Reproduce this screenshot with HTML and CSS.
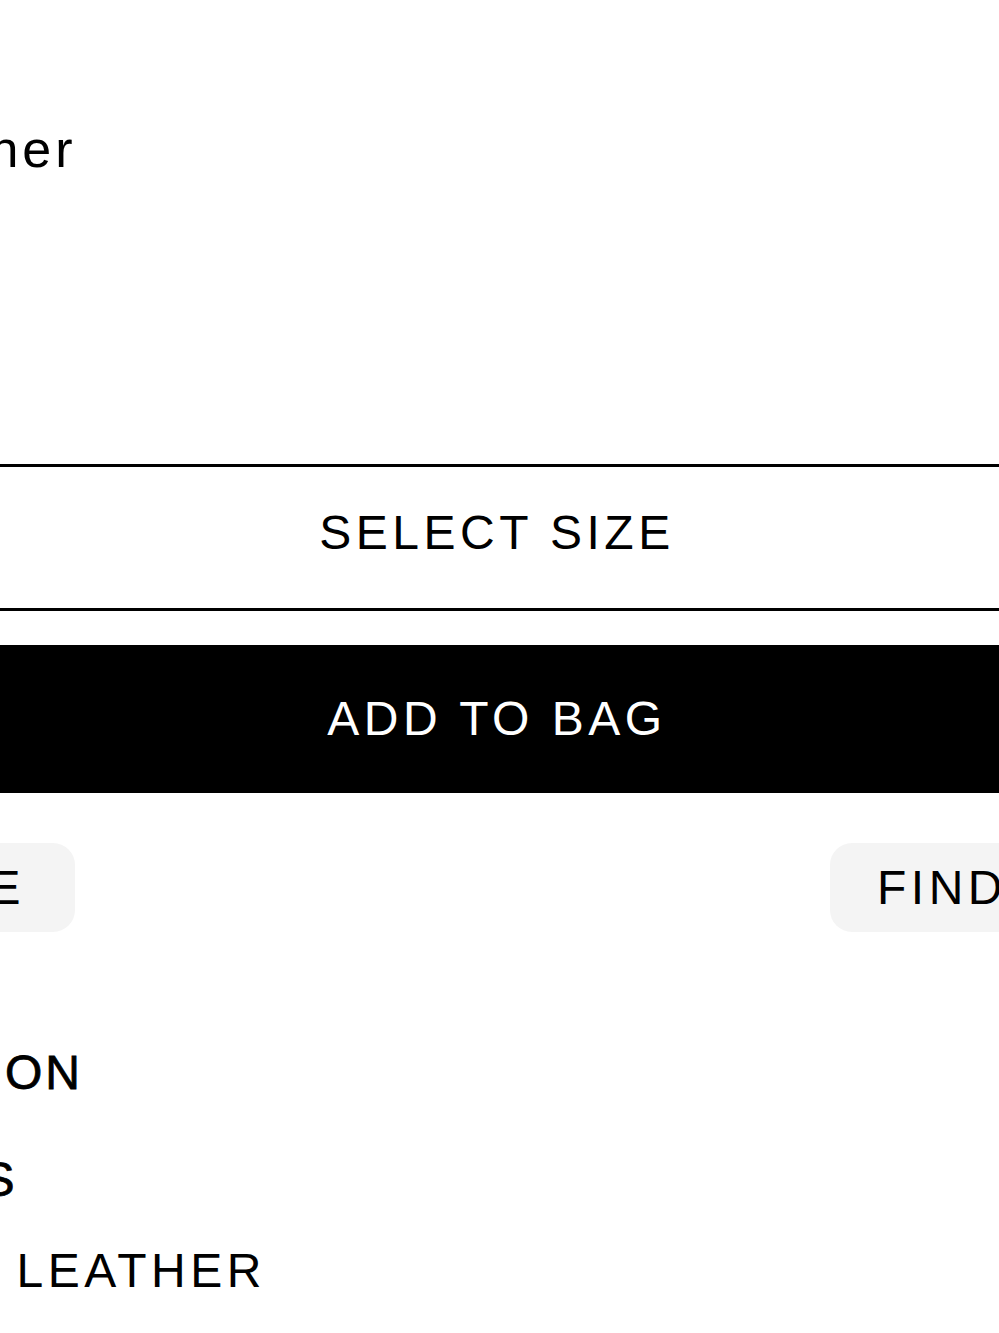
FILE: index.html
```html
<!DOCTYPE html>
<html lang="en">
<head>
<meta charset="utf-8">
<title>Product</title>
<link rel="stylesheet" href="styles.css">
</head>
<body>
<main class="page">
  <h1 class="title">Runner</h1>
  <button class="btn btn-outline">SELECT SIZE</button>
  <button class="btn btn-solid">ADD TO BAG</button>
  <div class="pills">
    <a class="pill pill-left">SIZE GUIDE</a>
    <a class="pill">FIND IN STORE</a>
  </div>
  <section class="details">
    <h2 class="head head-desc">DESCRIPTION</h2>
    <h2 class="head head-det">DETAILS</h2>
    <p class="spec">CALF LEATHER</p>
  </section>
</main>
</body>
</html>
```
FILE: styles.css
```css
html, body {
  margin: 0;
  padding: 0;
  background: #fff;
}
body {
  width: 999px;
  height: 1333px;
  overflow: hidden;
  font-family: "Liberation Sans", Arial, sans-serif;
  color: #000;
}
.page {
  margin-left: -400px;
  width: 1794px;
  display: flex;
  flex-direction: column;
}
.title {
  margin: 119px 0 0 282px;
  font-size: 52px;
  line-height: 60px;
  font-weight: 400;
  letter-spacing: 4px;
  white-space: nowrap;
}
.btn {
  display: flex;
  align-items: center;
  justify-content: center;
  width: 100%;
  font-family: inherit;
  font-size: 48px;
  line-height: 48px;
  letter-spacing: 4.5px;
  border-radius: 0;
  padding: 0;
  box-sizing: border-box;
}
.btn-outline {
  margin-top: 285px;
  height: 147px;
  background: #fff;
  color: #000;
  border: 3px solid #000;
  padding-bottom: 10px;
}
.btn-solid {
  margin-top: 34px;
  height: 148px;
  background: #000;
  color: #fff;
  border: 0;
}
.pills {
  margin-top: 50px;
  display: flex;
  gap: 755px;
  padding-left: 61px;
}
.pill {
  display: flex;
  align-items: center;
  height: 89px;
  padding: 0 50px 0 47px;
  background: #f4f4f4;
  border-radius: 22px;
  font-size: 48px;
  line-height: 48px;
  letter-spacing: 4.5px;
  white-space: nowrap;
}
.details {
  display: flex;
  flex-direction: column;
}
.head, .spec {
  margin: 0;
  font-size: 48px;
  line-height: 48px;
  white-space: nowrap;
}
.head {
  font-weight: 400;
  letter-spacing: 3px;
  -webkit-text-stroke: 0.8px #000;
}
.spec {
  letter-spacing: 4.5px;
}
.head-desc {
  margin-top: 117px;
  margin-left: 122px;
}
.head-det {
  margin-top: 59px;
  margin-left: 200px;
}
.spec {
  margin-top: 43px;
  margin-left: 258px;
}
```
